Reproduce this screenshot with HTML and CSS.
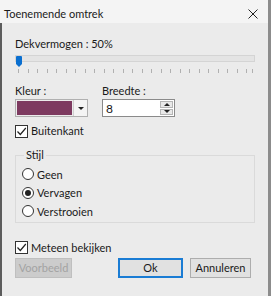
FILE: index.html
```html
<!DOCTYPE html>
<html lang="nl">
<head>
  <meta charset="UTF-8">
  <title>Toenemende omtrek</title>
  <link rel="stylesheet" href="styles.css">
</head>
<body>

  <div class="window">
    <div class="titlebar">
      <span class="title">Toenemende omtrek</span>
      <svg class="close" width="10" height="10" viewBox="0 0 10 10">
        <path d="M0.5 0.5 L9.5 9.5 M9.5 0.5 L0.5 9.5" stroke="#222" stroke-width="1"/>
      </svg>
    </div>

    <div class="content">
      <div class="label">Dekvermogen : 50%</div>
      <div class="slider">
        <div class="track"></div>
        <div class="thumb"></div>
      </div>
      <svg class="ticks" width="240" height="4" viewBox="0 0 240 4">
        <path stroke="#b0b0b0" stroke-width="1" d="M3.5 0v4M13.5 0v4M22.5 0v4M32.5 0v4M41.5 0v4M51.5 0v4M60.5 0v4M70.5 0v4M79.5 0v4M89.5 0v4M98.5 0v4M108.5 0v4M117.5 0v4M127.5 0v4M136.5 0v4M146.5 0v4M155.5 0v4M165.5 0v4M174.5 0v4M184.5 0v4M193.5 0v4M203.5 0v4M212.5 0v4M222.5 0v4M231.5 0v4M237.5 0v4"/>
      </svg>

      <div class="fields">
        <div class="field">
          <div class="label">Kleur :</div>
          <div class="combo">
            <div class="swatch"></div>
            <div class="combo-arrow"><span class="tri-down"></span></div>
          </div>
        </div>
        <div class="field">
          <div class="label">Breedte :</div>
          <div class="spin">
            <span class="spin-value">8</span>
            <div class="spin-buttons">
              <div class="spin-btn"><span class="tri-up"></span></div>
              <div class="spin-btn"><span class="tri-down"></span></div>
            </div>
          </div>
        </div>
      </div>

      <div class="check check-outer">
        <span class="box"><svg width="11" height="11" viewBox="0 0 11 11"><path d="M1.5 5.5 L4.3 8.5 L9.8 2" fill="none" stroke="#222" stroke-width="1.2"/></svg></span>
        <span>Buitenkant</span>
      </div>

      <fieldset class="group">
        <legend>Stijl</legend>
        <div class="radio"><span class="dot"></span><span>Geen</span></div>
        <div class="radio checked"><span class="dot"></span><span>Vervagen</span></div>
        <div class="radio"><span class="dot"></span><span>Verstrooien</span></div>
      </fieldset>

      <div class="check check-preview">
        <span class="box"><svg width="11" height="11" viewBox="0 0 11 11"><path d="M1.5 5.5 L4.3 8.5 L9.8 2" fill="none" stroke="#222" stroke-width="1.2"/></svg></span>
        <span>Meteen bekijken</span>
      </div>

      <div class="buttons">
        <button class="btn disabled">Voorbeeld</button>
        <div class="spacer"></div>
        <button class="btn default">Ok</button>
        <button class="btn">Annuleren</button>
      </div>
    </div>
  </div>

</body>
</html>
```

FILE: styles.css
```css
body {
  margin: 0;
  background-color: #ebebeb;
  font-family: Lato, "Noto Sans", sans-serif;
  font-size: 11px;
  color: #1a1a1a;
}

.window {
  width: 271px;
  height: 296px;
  box-sizing: border-box;
  border-right: 3px solid #8c8c8c;
  background-color: #ebebeb;
}

.titlebar {
  height: 23px;
  display: flex;
  align-items: center;
  justify-content: space-between;
  padding: 0 10px 0 4px;
  background-color: #f4f4f4;
}

.title {
  font-size: 11px;
  line-height: 16px;
  margin-top: 4px;
}

.close {
  margin-top: 4px;
}

.content {
  height: 273px;
  box-sizing: border-box;
  border-left: 2px solid #5c5c5c;
  padding: 13px 13px 0 13px;
}

.label {
  line-height: 16px;
}

.slider {
  position: relative;
  height: 12px;
  margin-top: 2px;
}

.track {
  margin-top: 3px;
  height: 5px;
  border: 1px solid #d4d4d4;
  background-color: #e4e4e4;
}

.thumb {
  position: absolute;
  left: 1px;
  top: 1px;
  width: 6px;
  height: 8px;
  background-color: #0a6fd0;
  border-radius: 1px 1px 0 0;
}

.thumb::after {
  content: "";
  position: absolute;
  left: 0;
  top: 8px;
  border-left: 3px solid transparent;
  border-right: 3px solid transparent;
  border-top: 3px solid #0a6fd0;
}

.ticks {
  display: block;
  margin-top: 2px;
}

.fields {
  display: flex;
  gap: 14px;
  margin-top: 10px;
}

.combo {
  display: flex;
  width: 73px;
  height: 18px;
  box-sizing: border-box;
  border: 1px solid #b0b0b0;
  background-color: #ececec;
}

.swatch {
  width: 55px;
  margin: 1px;
  background-color: #7d3a60;
}

.combo-arrow {
  flex: 1;
  display: flex;
  align-items: center;
  justify-content: center;
  background-color: #f4f4f4;
  border-left: 1px solid #d0d0d0;
}

.tri-down {
  border-left: 3px solid transparent;
  border-right: 3px solid transparent;
  border-top: 3px solid #222;
}

.tri-up {
  border-left: 3px solid transparent;
  border-right: 3px solid transparent;
  border-bottom: 3px solid #222;
}

.spin {
  display: flex;
  justify-content: space-between;
  width: 73px;
  height: 18px;
  box-sizing: border-box;
  border: 1px solid #8a8a8a;
  background-color: #ffffff;
  padding: 1px;
}

.spin-value {
  padding-left: 2px;
  line-height: 15px;
  font-size: 12px;
}

.spin-buttons {
  display: flex;
  flex-direction: column;
  gap: 1px;
  width: 13px;
}

.spin-btn {
  flex: 1;
  display: flex;
  align-items: center;
  justify-content: center;
  background-color: #e8e8e8;
  border: 1px solid #b5b5b5;
}

.check {
  display: flex;
  align-items: center;
  gap: 3px;
  line-height: 16px;
}

.check-outer {
  margin-top: 6px;
}

.box {
  width: 13px;
  height: 13px;
  box-sizing: border-box;
  border: 1px solid #333;
  background-color: #fff;
  display: flex;
  align-items: center;
  justify-content: center;
}

.group {
  margin: 9px 0 0 0;
  padding: 3px 0 1px 6px;
  border: 1px solid #dadada;
  min-width: 0;
}

.group legend {
  padding: 0 2px;
  margin-left: 2px;
  line-height: 14px;
}

.radio {
  display: flex;
  align-items: center;
  gap: 3px;
  height: 18.5px;
}

.dot {
  width: 12px;
  height: 12px;
  box-sizing: border-box;
  border: 1px solid #333;
  border-radius: 50%;
  background-color: #fff;
  display: flex;
  align-items: center;
  justify-content: center;
}

.radio.checked .dot::after {
  content: "";
  width: 6px;
  height: 6px;
  border-radius: 50%;
  background-color: #222;
}

.check-preview {
  margin-top: 17px;
}

.buttons {
  display: flex;
  gap: 7px;
  margin-top: 2px;
  padding-right: 4px;
}

.spacer {
  flex: 1;
}

.btn {
  width: 61px;
  height: 20px;
  padding: 0;
  font-family: inherit;
  font-size: 11px;
  color: #1a1a1a;
  background-color: #e1e1e1;
  border: 1px solid #adadad;
}

.btn.disabled {
  width: 57px;
  color: #a3a3a3;
  background-color: #cccccc;
  border-color: #bfbfbf;
}

.btn.default {
  width: 65px;
  border: 2px solid #1a7cd4;
}
```
